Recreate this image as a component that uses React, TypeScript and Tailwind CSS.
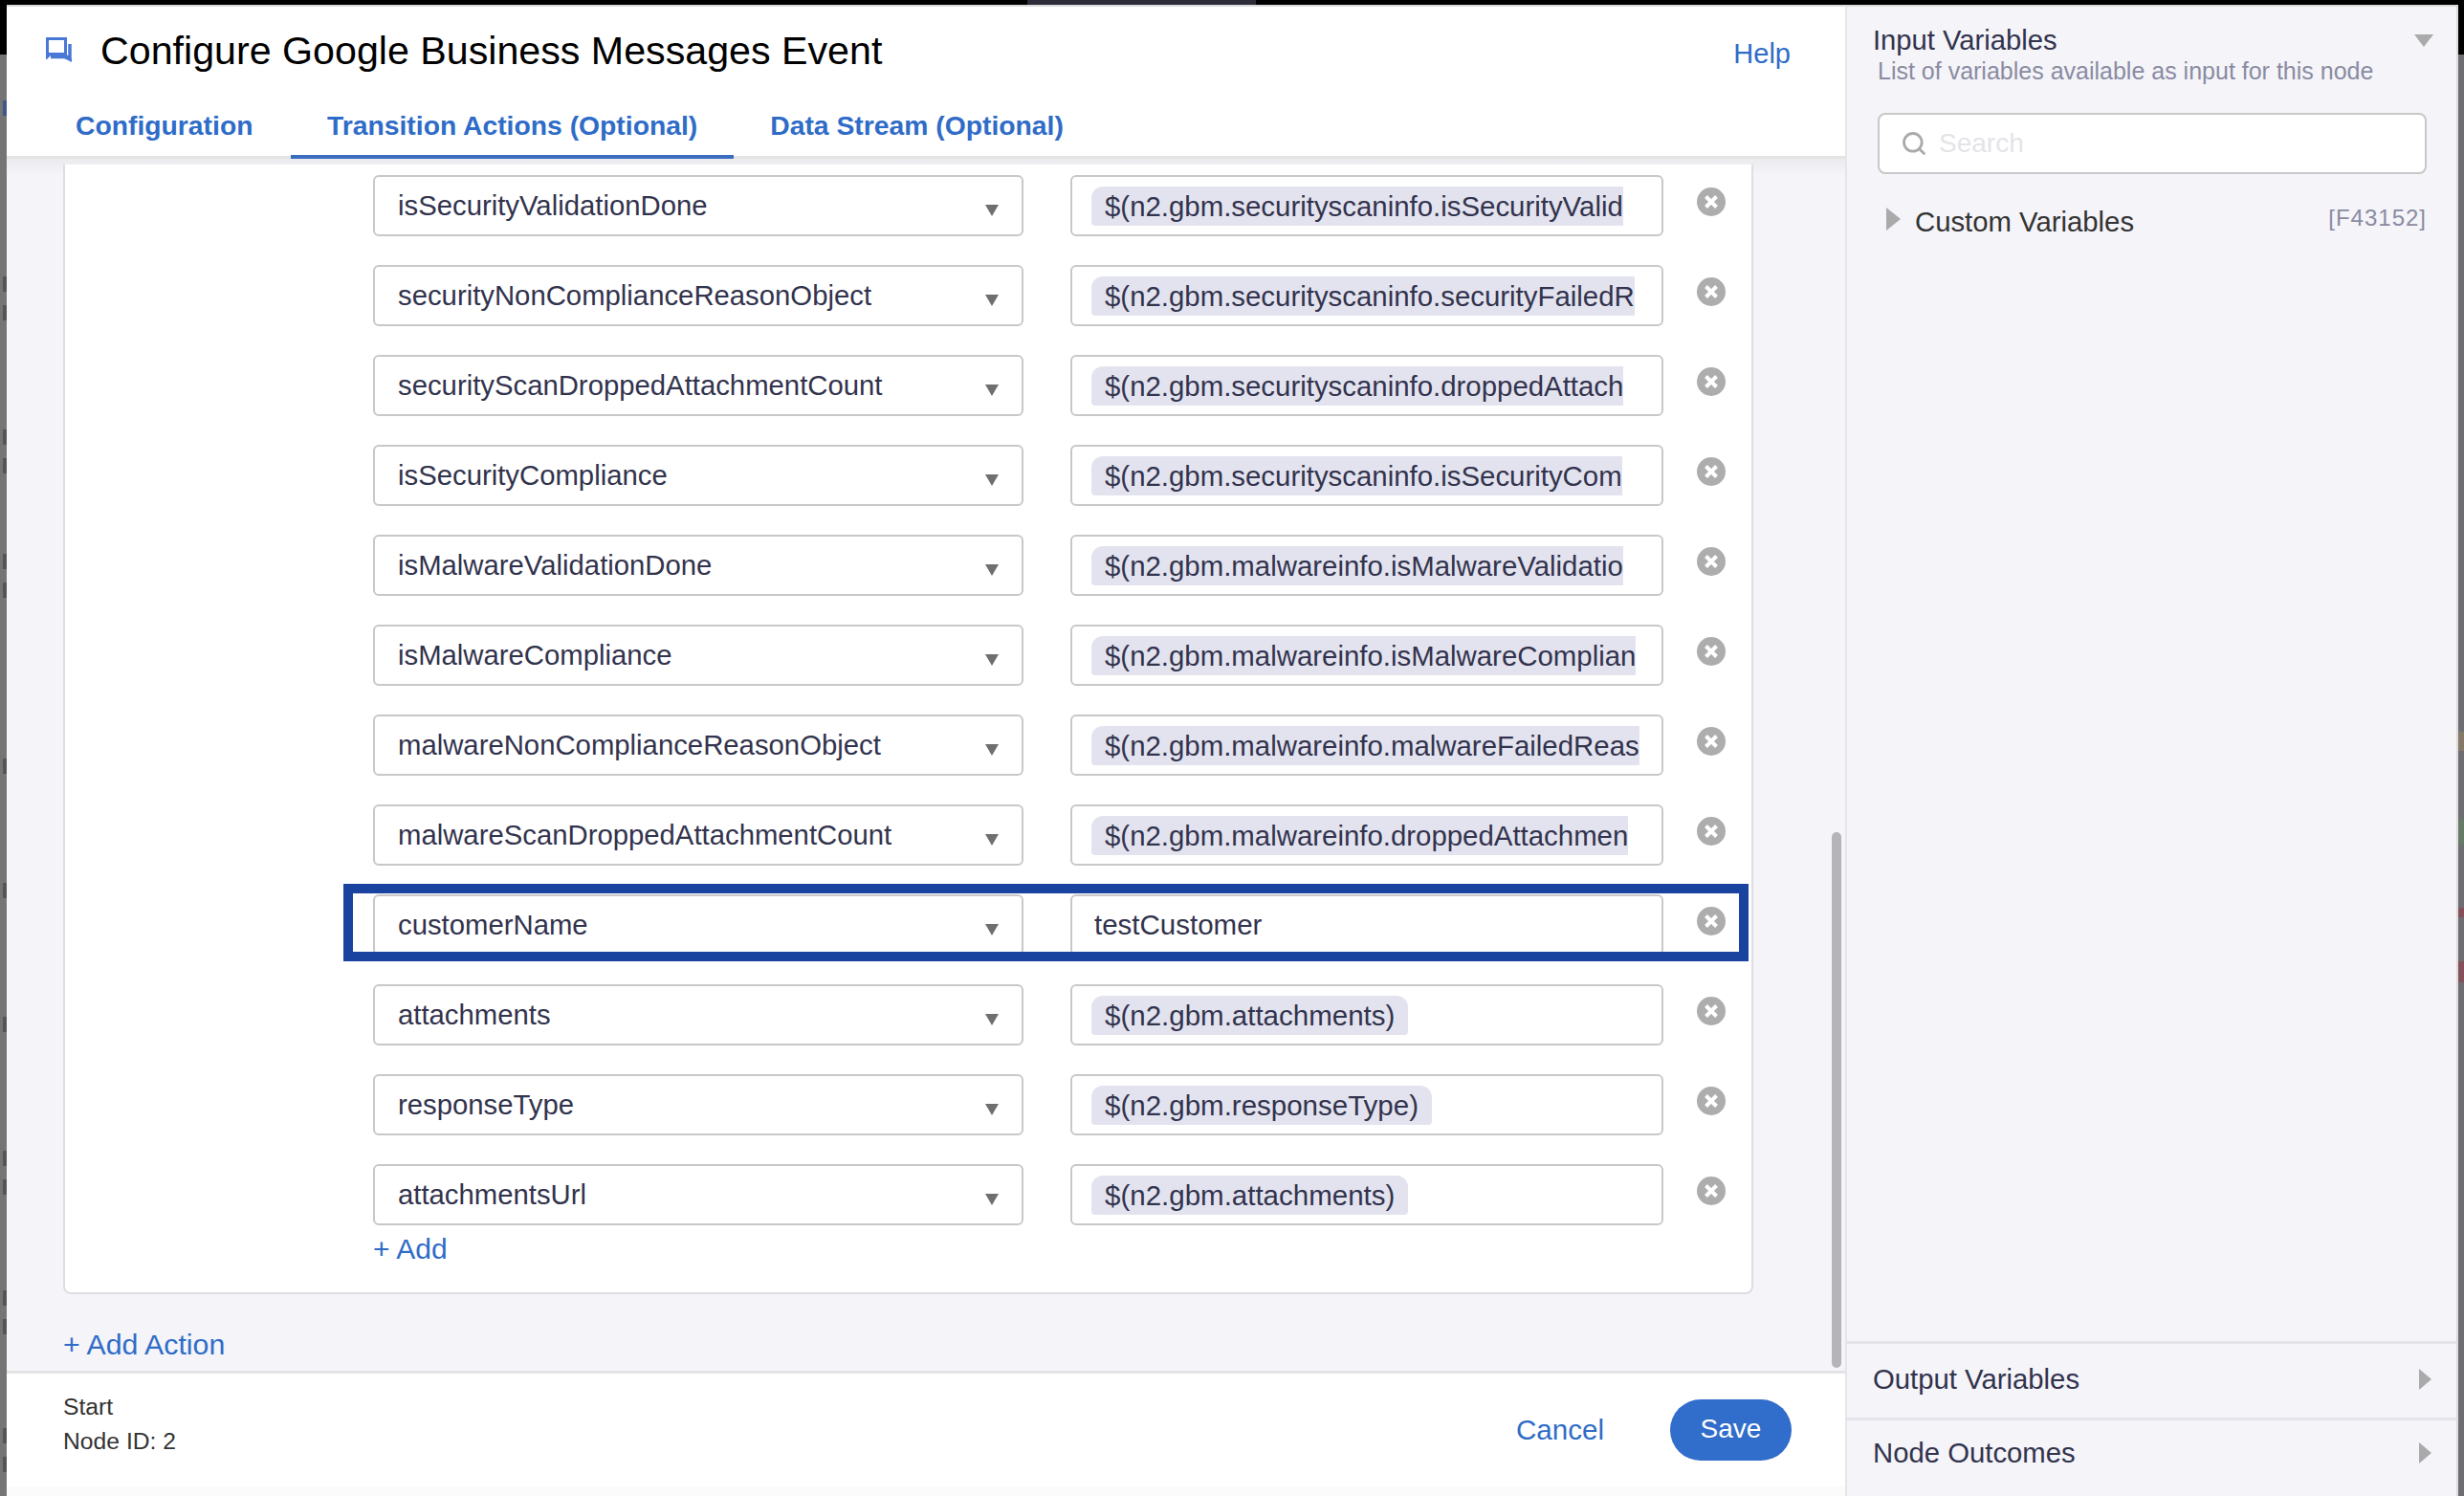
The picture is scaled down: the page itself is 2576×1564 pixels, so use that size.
import React from 'react';
import { Search } from 'lucide-react';

const SANS = "font-['Liberation_Sans',Arial,sans-serif]";

// rows of the transition action mapping; long chip values are cut off as in the list
const rows: { name: string; value: string; chip?: 'cut' | 'full' }[] = [
  { name: 'isSecurityValidationDone', value: '$(n2.gbm.securityscaninfo.isSecurityValid', chip: 'cut' },
  { name: 'securityNonComplianceReasonObject', value: '$(n2.gbm.securityscaninfo.securityFailedR', chip: 'cut' },
  { name: 'securityScanDroppedAttachmentCount', value: '$(n2.gbm.securityscaninfo.droppedAttach', chip: 'cut' },
  { name: 'isSecurityCompliance', value: '$(n2.gbm.securityscaninfo.isSecurityCom', chip: 'cut' },
  { name: 'isMalwareValidationDone', value: '$(n2.gbm.malwareinfo.isMalwareValidatio', chip: 'cut' },
  { name: 'isMalwareCompliance', value: '$(n2.gbm.malwareinfo.isMalwareComplian', chip: 'cut' },
  { name: 'malwareNonComplianceReasonObject', value: '$(n2.gbm.malwareinfo.malwareFailedReas', chip: 'cut' },
  { name: 'malwareScanDroppedAttachmentCount', value: '$(n2.gbm.malwareinfo.droppedAttachmen', chip: 'cut' },
  { name: 'customerName', value: 'testCustomer' },
  { name: 'attachments', value: '$(n2.gbm.attachments)', chip: 'full' },
  { name: 'responseType', value: '$(n2.gbm.responseType)', chip: 'full' },
  { name: 'attachmentsUrl', value: '$(n2.gbm.attachments)', chip: 'full' },
];

const ChatIcon = () => (
  <svg width="28" height="26" viewBox="0 0 28 26" fill="none" className="-mt-[3px] shrink-0">
    <path d="M1.5 1.5H20.5V17.5H1.5Z" stroke="#4a78d6" strokeWidth="3" />
    <path d="M0 17h7L1 23H0z" fill="#4a78d6" />
    <path d="M5 20.5H25V7" stroke="#4a78d6" strokeWidth="3.5" />
    <path d="M19 22h8v4z" fill="#4a78d6" />
  </svg>
);

const CloseIcon = () => (
  <svg width="30" height="30" viewBox="0 0 30 30" className="shrink-0">
    <circle cx="15" cy="15" r="15" fill="#adadad" />
    <path d="M9.5 9.5l11 11M20.5 9.5l-11 11" stroke="#fff" strokeWidth="4" />
  </svg>
);

const Row = ({ name, value, chip }: { name: string; value: string; chip?: 'cut' | 'full' }) => (
  <div className="flex h-[64px] items-start">
    <div className="flex h-[64px] w-[680px] items-center justify-between rounded-[6px] border-2 border-[#c8c8c8] pl-[24px] pr-[24px] text-[#32334d]">
      <span className="-mt-[1px] text-[29.3px] leading-[32px]">{name}</span>
      <span className="mt-[9px] h-0 w-0 border-x-[7px] border-t-[12px] border-x-transparent border-t-[#6f6f6f]" />
    </div>
    <div className="ml-[49px] flex h-[64px] w-[620px] items-center rounded-[6px] border-2 border-[#c8c8c8] pl-[20px] text-[#32334d]">
      {chip === 'cut' && (
        <span className="mt-[1px] flex h-[41px] items-center rounded-tl-[12px] rounded-bl-[4px] bg-[#e3e3ef] pl-[14px] text-[29.4px] leading-[32px] whitespace-nowrap">
          {value}
        </span>
      )}
      {chip === 'full' && (
        <span className="mt-[1px] flex h-[41px] items-center rounded-t-[12px] rounded-b-[4px] bg-[#e3e3ef] px-[14px] text-[29.5px] leading-[32px] whitespace-nowrap">
          {value}
        </span>
      )}
      {!chip && <span className="pl-[3px] text-[29.5px] leading-[32px]">{value}</span>}
    </div>
    <div className="ml-[35px] mt-[13px] flex">
      <CloseIcon />
    </div>
  </div>
);

// marks of the page behind the dialog that show along its left edge
const leftMarks: { top: number; height: number; color: string }[] = [
  { top: 100, height: 16, color: 'bg-[#3d5a85]' },
  { top: 284, height: 16, color: 'bg-[#555555]' },
  { top: 314, height: 16, color: 'bg-[#555555]' },
  { top: 444, height: 16, color: 'bg-[#555555]' },
  { top: 474, height: 16, color: 'bg-[#555555]' },
  { top: 574, height: 16, color: 'bg-[#555555]' },
  { top: 604, height: 16, color: 'bg-[#555555]' },
  { top: 788, height: 16, color: 'bg-[#555555]' },
  { top: 918, height: 16, color: 'bg-[#555555]' },
  { top: 1058, height: 16, color: 'bg-[#555555]' },
  { top: 1198, height: 16, color: 'bg-[#555555]' },
  { top: 1228, height: 16, color: 'bg-[#555555]' },
  { top: 1344, height: 16, color: 'bg-[#555555]' },
  { top: 1374, height: 16, color: 'bg-[#555555]' },
  { top: 1488, height: 16, color: 'bg-[#555555]' },
  { top: 1518, height: 16, color: 'bg-[#555555]' },
];

const App: React.FC = () => {
  return (
    <div className={`${SANS} relative flex h-[1564px] w-[2576px] flex-col overflow-hidden bg-black`}>
      {/* top of the page behind the dialog */}
      <div className="flex h-[5px] shrink-0 bg-black">
        <div className="ml-[1074px] h-[5px] w-[239px] bg-[#2c2d38]" />
      </div>
      <div className="flex min-h-0 flex-1">
        <div className="relative w-[7px] shrink-0 overflow-hidden bg-[#757575]">
          <div className="h-[52px] bg-black" />
          {leftMarks.map((mark) => (
            <span
              key={mark.top}
              className={`absolute right-0 w-[4px] ${mark.color}`}
              style={{ top: mark.top, height: mark.height }}
            />
          ))}
        </div>

        {/* Left: form */}
        <div className="flex w-[1922px] shrink-0 flex-col border-t-2 border-[#dcdcdc] bg-white">
          <div className="relative h-[159px] shrink-0 border-b-[3px] border-[#e4e4e4] bg-white">
            <div className="flex items-center pl-[41px] pr-[57px] pt-[23px]">
              <ChatIcon />
              <h1 className="ml-[29px] text-[41.2px] leading-[46px] text-black">Configure Google Business Messages Event</h1>
              <a className="ml-auto mt-[6px] text-[29px] leading-[32px] text-[#2f6cc7]">Help</a>
            </div>
            <div className="absolute bottom-[-3px] left-[72px] flex text-[28.3px] leading-[34px] font-bold text-[#2f6cc7]">
              <div className="w-[225px] pb-[18px]">Configuration</div>
              <div className="border-b-[4px] border-[#3a6cc0] px-[38px] pb-[14px]">Transition Actions (Optional)</div>
              <div className="pb-[18px] pl-[38px]">Data Stream (Optional)</div>
            </div>
          </div>

          <div className="relative min-h-0 flex-1 overflow-hidden bg-[#f4f4f9]">
            <div className="absolute inset-x-0 top-0 h-[16px] bg-gradient-to-b from-[#ebebee] to-[#f4f4f9]" />
            <div className="relative mx-[59px] mt-[6px] flex h-[1181px] w-[1767px] flex-col rounded-b-[8px] border-x-2 border-b-2 border-[#dedee2] bg-white pl-[322px] pt-[11px]">
              <div className="flex flex-col gap-[30px]">
                {rows.map((row) => (
                  <Row key={row.name} {...row} />
                ))}
              </div>
              <a className="mt-[8px] text-[30px] leading-[34px] text-[#2f6cc7]">+ Add</a>
            </div>
            <a className="relative ml-[59px] mt-[36px] block text-[30.3px] leading-[34px] text-[#2f6cc7]">+ Add Action</a>

            {/* scrollbar */}
            <div className="absolute right-[4px] top-[704px] h-[560px] w-[10px] rounded-full bg-[#b5b5b8]" />
            {/* annotation around the customerName row */}
            <div className="absolute left-[352px] top-[758px] h-[81px] w-[1469px] border-[10px] border-[#1a43a0]" />
          </div>

          <div className="flex h-[131px] shrink-0 items-start justify-between border-t-[3px] border-b-[10px] border-t-[#e4e4e4] border-b-[#fbfbfb] bg-white pl-[59px] pr-[56px]">
            <div className="pt-[17px] text-[24.7px] leading-[36px] text-[#333333]">
              <div>Start</div>
              <div>Node ID: 2</div>
            </div>
            <div className="flex items-center pt-[27px]">
              <a className="text-[29.6px] leading-[34px] text-[#2f6cc7]">Cancel</a>
              <button className="ml-[69px] h-[64px] w-[127px] rounded-full bg-[#316dca] pb-[2px] text-[28px] text-white">Save</button>
            </div>
          </div>
        </div>

        {/* Right: variables */}
        <div className="flex min-w-0 flex-1 flex-col border-t-2 border-l-2 border-r-2 border-t-[#dcdcdc] border-l-[#e6e6ea] border-r-[#dcdcdc] bg-[#f4f4f9]">
          <div className="min-h-0 flex-1 pl-[27px] pr-[31px] pt-[18px]">
            <div className="flex items-center justify-between">
              <span className="text-[29.2px] leading-[34px] text-[#32334d]">Input Variables</span>
              <span className="mr-[-7px] h-0 w-0 border-x-[10px] border-t-[13px] border-x-transparent border-t-[#aaaaaa]" />
            </div>
            <div className="ml-[5px] text-[25px] leading-[30px] text-[#8a8ba1]">List of variables available as input for this node</div>
            <div className="ml-[5px] mt-[29px] flex h-[64px] items-center rounded-[8px] border-2 border-[#c8c8c8] bg-white pl-[22px]">
              <Search size={28} strokeWidth={2.4} className="text-[#aaaaaa]" />
              <span className="ml-[12px] text-[28px] text-[#e4e4e8]">Search</span>
            </div>
            <div className="mt-[33px] flex items-start">
              <span className="ml-[14px] mt-[2px] h-0 w-0 border-y-[12px] border-l-[15px] border-y-transparent border-l-[#aaaaaa]" />
              <span className="ml-[15px] text-[29.3px] leading-[34px] text-[#333333]">Custom Variables</span>
              <span className="ml-auto mt-[-2px] text-[24px] leading-[30px] tracking-[1px] text-[#8a8ba1]">[F43152]</span>
            </div>
          </div>
          <div className="flex h-[80px] shrink-0 items-center justify-between border-t-[3px] border-[#e4e4ea] pl-[27px] pr-[26px] pb-[3px] text-[29.3px] text-[#32334d]">
            <span>Output Variables</span>
            <span className="h-0 w-0 border-y-[11px] border-l-[13px] border-y-transparent border-l-[#aaaaaa]" />
          </div>
          <div className="flex h-[82px] shrink-0 items-start justify-between border-t-[3px] border-[#e4e4ea] pl-[27px] pr-[26px] pt-[17px] text-[29.3px] leading-[34px] text-[#32334d]">
            <span>Node Outcomes</span>
            <span className="mt-[6px] h-0 w-0 border-y-[11px] border-l-[13px] border-y-transparent border-l-[#aaaaaa]" />
          </div>
        </div>

        <div className="flex w-[6px] shrink-0 flex-col bg-[#6e6e72]">
          <div className="h-[52px] bg-black" />
          <div className="mt-[708px] h-[20px] bg-[#85796a]" />
          <div className="mt-[72px] h-[26px] bg-[#667a68]" />
          <div className="mt-[66px] h-[10px] bg-[#85505a]" />
          <div className="mt-[46px] h-[22px] bg-[#85505a]" />
        </div>
      </div>
    </div>
  );
};

export default App;
